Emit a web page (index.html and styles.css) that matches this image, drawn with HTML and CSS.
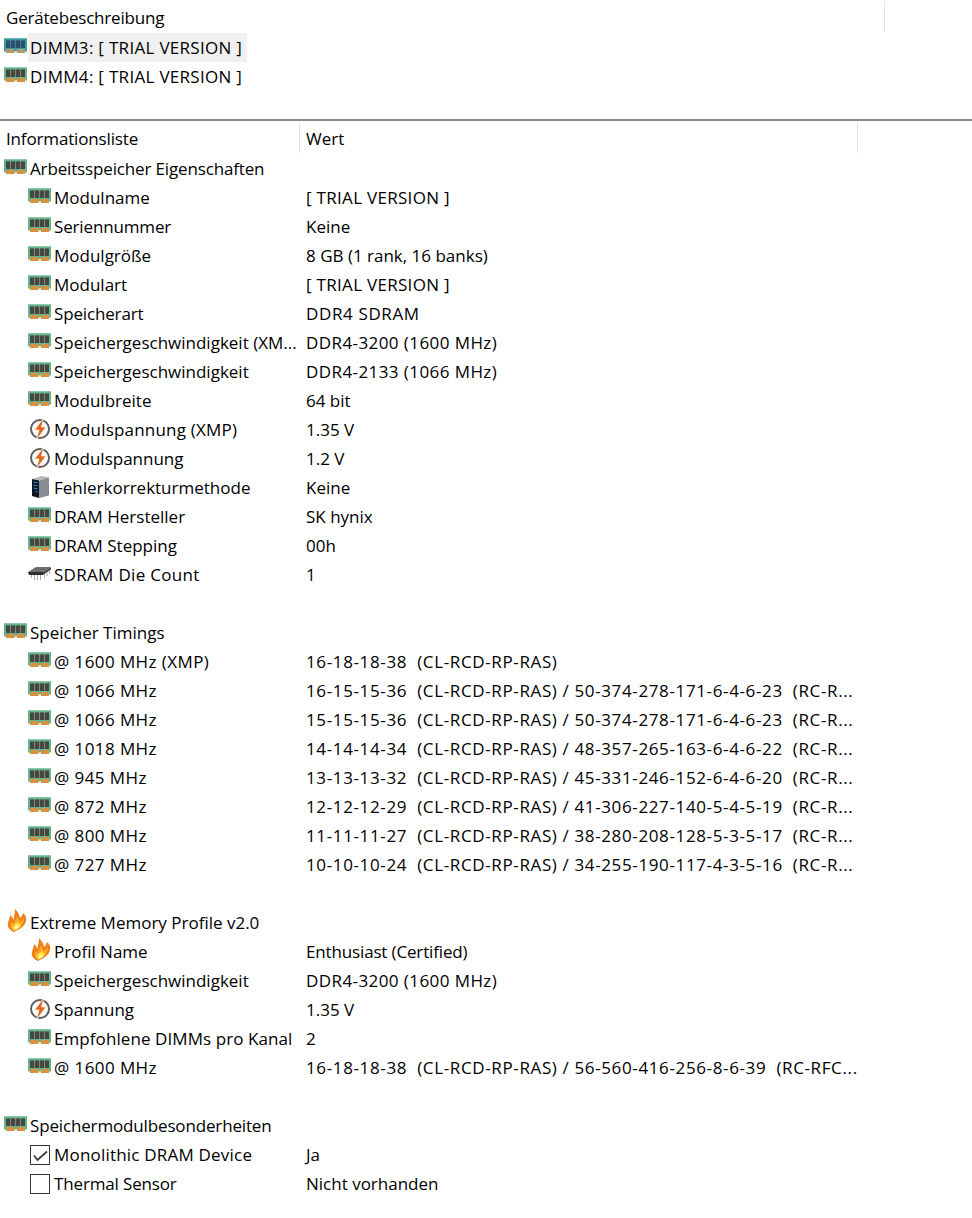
FILE: index.html
```html
<!DOCTYPE html>
<html lang="de">
<head>
<meta charset="utf-8">
<title>Gerätebeschreibung</title>
<link rel="stylesheet" href="styles.css">
</head>
<body>
<svg class="defs" width="0" height="0" aria-hidden="true">
  <defs>
    <symbol id="ram" viewBox="0 0 23 15">
      <rect x="0" y="0" width="23" height="13.5" fill="#66b48e"/>
      <rect x="0" y="0" width="23" height="1" fill="#8ccaa8"/>
      <rect x="2" y="2.5" width="19" height="7.5" fill="#7a8a78"/>
      <rect x="2" y="2.5" width="4" height="7.5" fill="#454840"/>
      <rect x="7" y="2.5" width="4" height="7.5" fill="#454840"/>
      <rect x="12" y="2.5" width="4" height="7.5" fill="#454840"/>
      <rect x="17" y="2.5" width="4" height="7.5" fill="#454840"/>
      <rect x="2" y="11" width="8.5" height="4" fill="#d6923e"/>
      <rect x="13" y="11" width="8" height="4" fill="#d6923e"/>
    </symbol>
    <symbol id="ram-blue" viewBox="0 0 23 15">
      <rect x="0" y="0" width="23" height="13.5" fill="#3f9a9e"/>
      <rect x="0" y="0" width="23" height="1" fill="#62b6b8"/>
      <rect x="2" y="2.5" width="19" height="7.5" fill="#527c94"/>
      <rect x="2" y="2.5" width="4" height="7.5" fill="#27506e"/>
      <rect x="7" y="2.5" width="4" height="7.5" fill="#27506e"/>
      <rect x="12" y="2.5" width="4" height="7.5" fill="#27506e"/>
      <rect x="17" y="2.5" width="4" height="7.5" fill="#27506e"/>
      <rect x="2" y="11" width="8.5" height="4" fill="#b49a72"/>
      <rect x="13" y="11" width="8" height="4" fill="#b49a72"/>
    </symbol>
    <symbol id="bolt" viewBox="0 0 20 24">
      <circle cx="10" cy="12" r="9" fill="#fff" stroke="#5c5c5c" stroke-width="2"/>
      <path d="M14 0.5 L4.5 13 H9 L6 23.5 L16 10 H11.5 Z" fill="#e2661c" stroke="#fff" stroke-width=".7"/>
    </symbol>
    <symbol id="flame" viewBox="0 0 20 23">
      <path d="M7 23 C2 21 0 17 1 14 C1.5 11 3 9 3 6 C5 8 6 9 6.5 11 C7 7 8 4 8 0 C11 3 12.5 6 13 9 C14.5 8 15.5 6 16 4 C18 6 20 8 19 12 C18 17 13 20 7 23 Z" fill="#f07f1a"/>
      <path d="M7 22 C4 20 3 17 4 14 C5 13 6 14 7 15 C8 12 9.5 9 10 7 C11 10 12 12 13 13 C14.5 12 16 10 16.5 9 C17.5 13 15 17 7 22 Z" fill="#fbb024"/>
      <path d="M7.5 21.5 C5.5 19.5 6 17 8 15.5 C9 15 10 14 10.5 13 C11.5 15 13 15.5 14 15 C14 18 11 20 7.5 21.5 Z" fill="#ffe84a"/>
      <path d="M8 20.5 C7.5 19 8.5 17.5 10 17 C10.5 17.5 11 18 11.5 18 C11 19.5 9.5 20 8 20.5 Z" fill="#fffbd6"/>
    </symbol>
    <symbol id="server" viewBox="0 0 18 22">
      <path d="M1 3 L11 0 L18 1.5 L8 4.5 Z" fill="#b4b8bc"/>
      <path d="M8 4.5 L18 1.5 V19.5 L8 22 Z" fill="#868c92"/>
      <path d="M1 3 L8 4.5 V22 L1 20 Z" fill="#10161c"/>
      <path d="M2.5 6 L6.5 7 M2.5 9 L6.5 10 M2.5 12 L6.5 13 M4.5 15.5 L6.5 16" stroke="#1f8fe8" stroke-width="1.2"/>
    </symbol>
    <symbol id="chip" viewBox="0 0 23 15">
      <path d="M0 7 L8 2 H23 L15 7 Z" fill="#6e6e6e"/>
      <path d="M0 7 H15 V10 H1 Z" fill="#2e2e2e"/>
      <path d="M15 7 L23 2 V4.5 L15 10 Z" fill="#484848"/>
      <path d="M3.5 10 V13 M6.5 10 V15 M9.5 10 V15 M12.5 10 V15 M16.5 9 V13 M19 7.5 V11 M21.5 5.5 V9" stroke="#a8a8a8" stroke-width="1"/>
    </symbol>
  </defs>
</svg>

<header class="device-pane">
  <div class="col-head">
    <span class="col-title">Gerätebeschreibung</span>
    <span class="col-rule"></span>
  </div>
  <ul class="device-list">
    <li class="row"><svg class="ico ram"><use href="#ram-blue"/></svg><span class="sel caps">DIMM3: [ TRIAL VERSION ]</span></li>
    <li class="row"><svg class="ico ram"><use href="#ram"/></svg><span class="lbl caps">DIMM4: [ TRIAL VERSION ]</span></li>
  </ul>
</header>

<main class="info-pane">
  <div class="info-head">
    <span class="key-head">Informationsliste</span>
    <span class="val-head">Wert</span>
  </div>

  <section class="group">
    <div class="row"><svg class="ico ram"><use href="#ram"/></svg><span class="lbl narrow">Arbeitsspeicher Eigenschaften</span></div>
    <div class="row sub"><span class="key"><svg class="ico ram"><use href="#ram"/></svg><span class="lbl">Modulname</span></span><span class="val caps">[ TRIAL VERSION ]</span></div>
    <div class="row sub"><span class="key"><svg class="ico ram"><use href="#ram"/></svg><span class="lbl narrow">Seriennummer</span></span><span class="val">Keine</span></div>
    <div class="row sub"><span class="key"><svg class="ico ram"><use href="#ram"/></svg><span class="lbl">Modulgröße</span></span><span class="val">8 GB (1 rank, 16 banks)</span></div>
    <div class="row sub"><span class="key"><svg class="ico ram"><use href="#ram"/></svg><span class="lbl">Modulart</span></span><span class="val caps">[ TRIAL VERSION ]</span></div>
    <div class="row sub"><span class="key"><svg class="ico ram"><use href="#ram"/></svg><span class="lbl narrow">Speicherart</span></span><span class="val num">DDR4 SDRAM</span></div>
    <div class="row sub"><span class="key"><svg class="ico ram"><use href="#ram"/></svg><span class="lbl">Speichergeschwindigkeit (XM...</span></span><span class="val mid">DDR4-3200 (1600 MHz)</span></div>
    <div class="row sub"><span class="key"><svg class="ico ram"><use href="#ram"/></svg><span class="lbl">Speichergeschwindigkeit</span></span><span class="val mid">DDR4-2133 (1066 MHz)</span></div>
    <div class="row sub"><span class="key"><svg class="ico ram"><use href="#ram"/></svg><span class="lbl">Modulbreite</span></span><span class="val">64 bit</span></div>
    <div class="row sub"><span class="key"><svg class="ico bolt"><use href="#bolt"/></svg><span class="lbl wider">Modulspannung (XMP)</span></span><span class="val">1.35 V</span></div>
    <div class="row sub"><span class="key"><svg class="ico bolt"><use href="#bolt"/></svg><span class="lbl">Modulspannung</span></span><span class="val">1.2 V</span></div>
    <div class="row sub"><span class="key"><svg class="ico server"><use href="#server"/></svg><span class="lbl">Fehlerkorrekturmethode</span></span><span class="val">Keine</span></div>
    <div class="row sub"><span class="key"><svg class="ico ram"><use href="#ram"/></svg><span class="lbl">DRAM Hersteller</span></span><span class="val">SK hynix</span></div>
    <div class="row sub"><span class="key"><svg class="ico ram"><use href="#ram"/></svg><span class="lbl">DRAM Stepping</span></span><span class="val">00h</span></div>
    <div class="row sub"><span class="key"><svg class="ico ram"><use href="#chip"/></svg><span class="lbl caps">SDRAM Die Count</span></span><span class="val">1</span></div>
  </section>

  <section class="group">
    <div class="row"><svg class="ico ram"><use href="#ram"/></svg><span class="lbl">Speicher Timings</span></div>
    <div class="row sub"><span class="key"><svg class="ico ram"><use href="#ram"/></svg><span class="lbl mid">@ 1600 MHz (XMP)</span></span><span class="val num">16-18-18-38&nbsp; (CL-RCD-RP-RAS)</span></div>
    <div class="row sub"><span class="key"><svg class="ico ram"><use href="#ram"/></svg><span class="lbl mid">@ 1066 MHz</span></span><span class="val num">16-15-15-36&nbsp; (CL-RCD-RP-RAS) / 50-374-278-171-6-4-6-23&nbsp; (RC-R...</span></div>
    <div class="row sub"><span class="key"><svg class="ico ram"><use href="#ram"/></svg><span class="lbl mid">@ 1066 MHz</span></span><span class="val num">15-15-15-36&nbsp; (CL-RCD-RP-RAS) / 50-374-278-171-6-4-6-23&nbsp; (RC-R...</span></div>
    <div class="row sub"><span class="key"><svg class="ico ram"><use href="#ram"/></svg><span class="lbl mid">@ 1018 MHz</span></span><span class="val num">14-14-14-34&nbsp; (CL-RCD-RP-RAS) / 48-357-265-163-6-4-6-22&nbsp; (RC-R...</span></div>
    <div class="row sub"><span class="key"><svg class="ico ram"><use href="#ram"/></svg><span class="lbl mid">@ 945 MHz</span></span><span class="val num">13-13-13-32&nbsp; (CL-RCD-RP-RAS) / 45-331-246-152-6-4-6-20&nbsp; (RC-R...</span></div>
    <div class="row sub"><span class="key"><svg class="ico ram"><use href="#ram"/></svg><span class="lbl mid">@ 872 MHz</span></span><span class="val num">12-12-12-29&nbsp; (CL-RCD-RP-RAS) / 41-306-227-140-5-4-5-19&nbsp; (RC-R...</span></div>
    <div class="row sub"><span class="key"><svg class="ico ram"><use href="#ram"/></svg><span class="lbl mid">@ 800 MHz</span></span><span class="val num">11-11-11-27&nbsp; (CL-RCD-RP-RAS) / 38-280-208-128-5-3-5-17&nbsp; (RC-R...</span></div>
    <div class="row sub"><span class="key"><svg class="ico ram"><use href="#ram"/></svg><span class="lbl mid">@ 727 MHz</span></span><span class="val num">10-10-10-24&nbsp; (CL-RCD-RP-RAS) / 34-255-190-117-4-3-5-16&nbsp; (RC-R...</span></div>
  </section>

  <section class="group">
    <div class="row"><svg class="ico flame"><use href="#flame"/></svg><span class="lbl">Extreme Memory Profile v2.0</span></div>
    <div class="row sub"><span class="key"><svg class="ico flame"><use href="#flame"/></svg><span class="lbl">Profil Name</span></span><span class="val narrow">Enthusiast (Certified)</span></div>
    <div class="row sub"><span class="key"><svg class="ico ram"><use href="#ram"/></svg><span class="lbl">Speichergeschwindigkeit</span></span><span class="val mid">DDR4-3200 (1600 MHz)</span></div>
    <div class="row sub"><span class="key"><svg class="ico bolt"><use href="#bolt"/></svg><span class="lbl">Spannung</span></span><span class="val">1.35 V</span></div>
    <div class="row sub"><span class="key"><svg class="ico ram"><use href="#ram"/></svg><span class="lbl slight">Empfohlene DIMMs pro Kanal</span></span><span class="val">2</span></div>
    <div class="row sub"><span class="key"><svg class="ico ram"><use href="#ram"/></svg><span class="lbl mid">@ 1600 MHz</span></span><span class="val num">16-18-18-38&nbsp; (CL-RCD-RP-RAS) / 56-560-416-256-8-6-39&nbsp; (RC-RFC...</span></div>
  </section>

  <section class="group">
    <div class="row"><svg class="ico ram"><use href="#ram"/></svg><span class="lbl narrow">Speichermodulbesonderheiten</span></div>
    <div class="row sub"><span class="key"><span class="check"><svg viewBox="0 0 18 18" class="tick"><path d="M3 9.5 L6.5 14 L16 5.5" fill="none" stroke="#3c3c3c" stroke-width="1.8"/></svg></span><span class="lbl wider">Monolithic DRAM Device</span></span><span class="val">Ja</span></div>
    <div class="row sub"><span class="key"><span class="check"></span><span class="lbl narrow">Thermal Sensor</span></span><span class="val">Nicht vorhanden</span></div>
  </section>
</main>
</body>
</html>
```

FILE: styles.css
```css
* { box-sizing: border-box; }
html, body { margin: 0; padding: 0; background: #fff; }
body {
  font-family: "Open Sans", "Noto Sans", sans-serif;
  font-size: 17px;
  color: #000;
  width: 972px;
  height: 1218px;
  overflow: hidden;
}
.defs { display: block; height: 0; }
.device-pane { height: 119px; }
.col-head { display: flex; height: 33px; padding-top: 1px; }
.col-title { width: 884px; padding: 2px 0 0 6px; line-height: 29px; letter-spacing: -.2px; }
.col-rule { width: 1px; height: 31px; background: #e5e5e5; }
.device-list { list-style: none; margin: 0; padding: 0; }
.row { display: flex; align-items: center; height: 29px; white-space: nowrap; }
.ico { flex: none; display: block; }
.ram { width: 23px; height: 15px; margin: -4px 3px 0 4px; }
.bolt { width: 20px; height: 24px; margin: -1px 4px 0 6px; }
.server { width: 18px; height: 22px; margin: -1px 5px 0 7px; }
.flame { width: 20px; height: 23px; margin: -4px 3px 0 7px; }
.sel { background: #f0f0f0; padding: 0 5px 0 2px; margin-left: -2px; line-height: 29px; }
.caps { letter-spacing: .3px; }
.mid { letter-spacing: .42px; }
.num { letter-spacing: .63px; }
.narrow { letter-spacing: -.15px; }
.wider { letter-spacing: .2px; }
.slight { letter-spacing: .08px; }
.info-pane { border-top: 2px solid #82878c; }
.info-head { display: flex; height: 31px; margin: 1px 0; }
.key-head { width: 300px; border-right: 1px solid #e5e5e5; padding: 1px 0 0 6px; line-height: 31px; letter-spacing: -.15px; }
.val-head { width: 558px; border-right: 1px solid #e5e5e5; padding: 1px 0 0 6px; line-height: 31px; }
.group { margin-bottom: 29px; }
.sub { padding-left: 24px; }
.key { display: flex; align-items: center; width: 282px; flex: none; }
.check { flex: none; width: 20px; height: 20px; margin: 0 4px 0 6px; border: 1px solid #333; background: #fff; display: block; }
.tick { display: block; width: 18px; height: 18px; }
```
